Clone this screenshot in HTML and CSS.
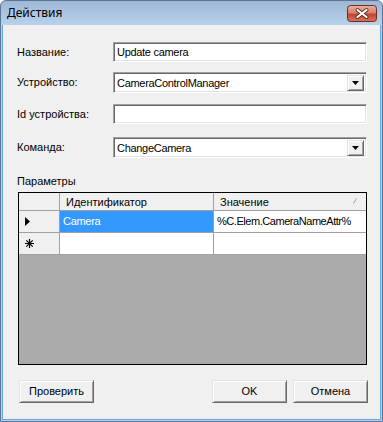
FILE: index.html
```html
<!DOCTYPE html>
<html lang="ru">
<head>
<meta charset="utf-8">
<title>Действия</title>
<link rel="stylesheet" href="styles.css">
</head>
<body>
<div class="window">
  <div class="titlebar">
    <span class="title">Действия</span>
    <span class="close">
      <svg width="30" height="17" viewBox="0 0 30 17">
        <defs>
          <linearGradient id="cg" x1="0" y1="0" x2="0" y2="1">
            <stop offset="0" stop-color="#eab1a3"/>
            <stop offset="0.45" stop-color="#d9806c"/>
            <stop offset="0.55" stop-color="#c4462e"/>
            <stop offset="1" stop-color="#d9755b"/>
          </linearGradient>
        </defs>
        <rect x="0.5" y="0.5" width="29" height="16" rx="3" fill="url(#cg)" stroke="#6b2c24"/>
        <path d="M10.5 5 L19.5 12 M19.5 5 L10.5 12" stroke="#5a2a22" stroke-width="4" stroke-linecap="round"/>
        <path d="M10.5 5 L19.5 12 M19.5 5 L10.5 12" stroke="#ffffff" stroke-width="2.2" stroke-linecap="round"/>
      </svg>
    </span>
  </div>
  <div class="client">
    <div class="form">
      <div class="row row1">
        <span class="lbl">Название:</span>
        <div class="textbox latin">Update camera</div>
      </div>
      <div class="row row2">
        <span class="lbl">Устройство:</span>
        <div class="combo">
          <span class="combo-text latin">CameraControlManager</span>
          <span class="dd"><svg width="7" height="4" viewBox="0 0 7 4"><path d="M0 0 H7 L3.5 4 Z" fill="#000"/></svg></span>
        </div>
      </div>
      <div class="row row3">
        <span class="lbl">Id устройства:</span>
        <div class="textbox"></div>
      </div>
      <div class="row row4">
        <span class="lbl">Команда:</span>
        <div class="combo">
          <span class="combo-text latin">ChangeCamera</span>
          <span class="dd"><svg width="7" height="4" viewBox="0 0 7 4"><path d="M0 0 H7 L3.5 4 Z" fill="#000"/></svg></span>
        </div>
      </div>
    </div>
    <div class="section-label">Параметры</div>
    <div class="grid">
      <div class="grow head">
        <div class="cell rh"></div>
        <div class="cell hc">Идентификатор</div>
        <div class="cell hc last">Значение<svg class="sortg" width="4" height="6" viewBox="0 0 4 6"><path d="M0.5 5.5 L3.5 0.5" stroke="#9a9a9a" stroke-width="1"/></svg></div>
      </div>
      <div class="grow">
        <div class="cell rh"><svg width="5" height="9" viewBox="0 0 5 9"><path d="M0 0 L5 4.5 L0 9 Z" fill="#000"/></svg></div>
        <div class="cell dc sel latin">Camera</div>
        <div class="cell dc last tight">%C.Elem.CameraNameAttr%</div>
      </div>
      <div class="grow">
        <div class="cell rh"><svg width="9" height="9" viewBox="0 0 9 9"><path d="M4.5 0 V9 M0 4.5 H9 M1.3 1.3 L7.7 7.7 M7.7 1.3 L1.3 7.7" stroke="#000" stroke-width="1.2"/></svg></div>
        <div class="cell dc"></div>
        <div class="cell dc last"></div>
      </div>
    </div>
    <div class="footer">
      <button class="btn">Проверить</button>
      <div class="right-btns">
        <button class="btn">OK</button>
        <button class="btn">Отмена</button>
      </div>
    </div>
  </div>
</div>
</body>
</html>
```
FILE: styles.css
```css
html, body {
  margin: 0;
  padding: 0;
  background: #ffffff;
}

.window {
  width: 383px;
  height: 422px;
  box-sizing: border-box;
  border: 1px solid #5b7597;
  border-radius: 6px 6px 0 0;
  background: linear-gradient(#9db7d6, #b9d1ea 24px, #b9d1ea);
  padding: 0 1px 1px;
  display: flex;
  flex-direction: column;
}

.titlebar {
  height: 24px;
  flex: none;
  display: flex;
  justify-content: space-between;
  align-items: flex-start;
  padding: 0 4px 0 5px;
}

.title {
  font-family: "Noto Sans", "Open Sans", sans-serif;
  font-size: 12px;
  line-height: 16px;
  color: #000;
  padding-top: 4px;
}

.close {
  display: block;
  width: 30px;
  height: 17px;
  margin-top: 4px;
}

.close svg {
  display: block;
}

.client {
  flex: 1;
  background: #f0f0f0;
  border: 1px solid #6aa6dc;
  border-top: none;
  padding: 0 12px 0 14px;
  font-family: "Liberation Sans", Arial, sans-serif;
  font-size: 11px;
  color: #000;
}

.latin {
  letter-spacing: -0.3px;
}

.tight {
  letter-spacing: -0.45px;
}

.form {
  display: flex;
  flex-direction: column;
}

.row {
  display: grid;
  grid-template-columns: 96px 254px;
  align-items: center;
}

.row1 { margin-top: 17px; }
.row2 { margin-top: 10px; }
.row3 { margin-top: 11px; }
.row4 { margin-top: 13px; }

.lbl {
  line-height: 13px;
  white-space: nowrap;
}

.textbox,
.combo {
  box-sizing: border-box;
  background: #fff;
  border: 1px solid;
  border-color: #a0a0a0 #ffffff #ffffff #a0a0a0;
  box-shadow: inset 1px 1px 0 #696969, inset -1px -1px 0 #e3e3e3;
  line-height: 13px;
  white-space: nowrap;
}

.textbox {
  height: 20px;
  padding: 3px 3px 0;
}

.combo {
  height: 21px;
  display: flex;
  align-items: center;
  justify-content: space-between;
  padding: 0 2px 0 3px;
}

.combo-text {
  padding-top: 1px;
}

.dd {
  width: 17px;
  height: 16px;
  box-sizing: border-box;
  background: #f0f0f0;
  border: 1px solid;
  border-color: #e3e3e3 #696969 #696969 #e3e3e3;
  box-shadow: inset 1px 1px 0 #ffffff, inset -1px -1px 0 #a0a0a0;
  display: flex;
  align-items: center;
  justify-content: center;
}

.dd svg {
  display: block;
  margin-top: 1px;
}

.section-label {
  margin-top: 17px;
  line-height: 13px;
}

.grid {
  margin-top: 4px;
  margin-left: 1px;
  width: 349px;
  height: 173px;
  box-sizing: border-box;
  border: 1px solid #000;
  background: #ababab;
}

.grow {
  display: grid;
  grid-template-columns: 41px 154px 152px;
  height: 22px;
}

.grow.head {
  height: 18px;
}

.cell {
  box-sizing: border-box;
  border-right: 1px solid #a0a0a0;
  border-bottom: 1px solid #a0a0a0;
  display: flex;
  align-items: center;
  white-space: nowrap;
  overflow: hidden;
  line-height: 13px;
}

.cell.last {
  border-right: none;
}

.rh {
  background: #f0f0f0;
  padding-left: 6px;
}

.hc {
  background: #f0f0f0;
  padding: 2px 0 0 6px;
  position: relative;
}

.head .hc:first-of-type {
  border-right-color: #d5d5d5;
}

.sortg {
  position: absolute;
  right: 9px;
  top: 5px;
}

.dc {
  background: #fff;
  padding-left: 3px;
}

.dc.sel {
  background: #3399ff;
  color: #fff;
}

.footer {
  margin-top: 15px;
  margin-left: 2px;
  display: flex;
  justify-content: space-between;
}

.right-btns {
  display: flex;
  gap: 6px;
}

.btn {
  width: 75px;
  height: 23px;
  box-sizing: border-box;
  margin: 0;
  padding: 0;
  background: #f0f0f0;
  border: 1px solid;
  border-color: #e3e3e3 #696969 #696969 #e3e3e3;
  box-shadow: inset 1px 1px 0 #ffffff, inset -1px -1px 0 #a0a0a0;
  font-family: "Liberation Sans", Arial, sans-serif;
  font-size: 11px;
  color: #000;
  line-height: 13px;
}
```
